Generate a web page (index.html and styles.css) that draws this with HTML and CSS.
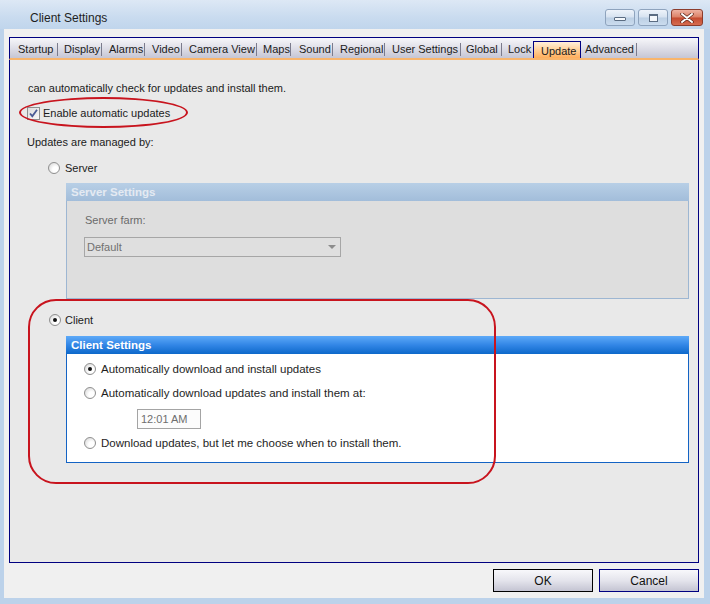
FILE: index.html
```html
<!DOCTYPE html>
<html>
<head>
<meta charset="utf-8">
<title>Client Settings</title>
<link rel="stylesheet" href="styles.css">
</head>
<body>
<div class="window">
  <div class="titlebar">
    <span class="title">Client Settings</span>
    <div class="caption">
      <span class="cbtn min"><i></i></span>
      <span class="cbtn max"><i></i></span>
      <span class="cbtn close"><svg width="14" height="10" viewBox="0 0 14 10"><path d="M2 1 L12 9 M12 1 L2 9" stroke="#5a2418" stroke-width="3.4" stroke-linecap="round"/><path d="M2 1 L12 9 M12 1 L2 9" stroke="#ffffff" stroke-width="2" stroke-linecap="round"/></svg></span>
    </div>
  </div>
  <div class="client">
    <div class="tabs">
      <div class="tab t-startup"><span class="tlabel">Startup</span><span class="sep"></span></div>
      <div class="tab t-display"><span class="tlabel">Display</span><span class="sep"></span></div>
      <div class="tab t-alarms"><span class="tlabel">Alarms</span><span class="sep"></span></div>
      <div class="tab t-video"><span class="tlabel">Video</span><span class="sep"></span></div>
      <div class="tab t-camera"><span class="tlabel">Camera View</span><span class="sep"></span></div>
      <div class="tab t-maps"><span class="tlabel">Maps</span><span class="sep"></span></div>
      <div class="tab t-sound"><span class="tlabel">Sound</span><span class="sep"></span></div>
      <div class="tab t-regional"><span class="tlabel">Regional</span><span class="sep"></span></div>
      <div class="tab t-user"><span class="tlabel">User Settings</span><span class="sep"></span></div>
      <div class="tab t-global"><span class="tlabel">Global</span><span class="sep"></span></div>
      <div class="tab t-lock"><span class="tlabel">Lock</span></div>
      <div class="tab t-update active"><span class="tlabel">Update</span></div>
      <div class="tab t-advanced"><span class="tlabel">Advanced</span><span class="sep"></span></div>
    </div>
    <div class="panel">
      <div class="intro">can automatically check for updates and install them.</div>
      <div class="check-row">
        <span class="checkbox"><svg width="11" height="11" viewBox="0 0 11 11"><path d="M2 5.5 L4.3 8.2 L9 1.8" fill="none" stroke="#4a5a94" stroke-width="1.8"/></svg></span>
        <span>Enable automatic updates</span>
      </div>
      <div class="managed">Updates are managed by:</div>
      <div class="radio-row server-radio">
        <span class="radio"></span><span>Server</span>
      </div>
      <div class="group server-group">
        <div class="ghead">Server Settings</div>
        <div class="field-label">Server farm:</div>
        <div class="select"><span>Default</span><svg width="8" height="4" viewBox="0 0 8 4"><path d="M0 0 H8 L4 4 Z" fill="#8c8c8c"/></svg></div>
      </div>
      <div class="radio-row client-radio">
        <span class="radio on"><i></i></span><span>Client</span>
      </div>
      <div class="group client-group">
        <div class="ghead">Client Settings</div>
        <div class="radio-row opt1"><span class="radio on"><i></i></span><span>Automatically download and install updates</span></div>
        <div class="radio-row opt2"><span class="radio"></span><span>Automatically download updates and install them at:</span></div>
        <div class="time">12:01 AM</div>
        <div class="radio-row opt3"><span class="radio"></span><span>Download updates, but let me choose when to install them.</span></div>
      </div>
      <div class="mark-ellipse"></div>
      <div class="mark-rect"></div>
    </div>
    <div class="footer">
      <button class="btn default">OK</button>
      <button class="btn">Cancel</button>
    </div>
  </div>
</div>
</body>
</html>
```
FILE: styles.css
```css
html, body {
  margin: 0;
  padding: 0;
}
body {
  width: 710px;
  height: 604px;
  overflow: hidden;
  background: #bcd2ea;
  font-family: "Liberation Sans", Arial, sans-serif;
  font-size: 11px;
  color: #1b1b1b;
}
.window {
  display: flex;
  flex-direction: column;
  height: 604px;
}
.titlebar {
  height: 29px;
  box-sizing: border-box;
  display: flex;
  align-items: flex-start;
  padding: 0 7px 0 30px;
  background: linear-gradient(#dde8f5, #c9dbef 60%, #c0d5ec);
}
.title {
  flex: 1;
  font-size: 12px;
  line-height: 16px;
  margin-top: 10px;
  color: #1e1e1e;
}
.caption {
  display: flex;
  gap: 3px;
  margin-top: 9px;
}
.cbtn {
  height: 17px;
  box-sizing: border-box;
  border: 1px solid #8ea3bd;
  border-radius: 3px;
  display: flex;
  align-items: center;
  justify-content: center;
  background: linear-gradient(#eef3fa, #d6e2f0 48%, #bccfe4 52%, #cbdcee);
}
.min, .max { width: 30px; }
.min i {
  width: 10px;
  height: 2px;
  border: 1px solid #5b6c82;
  background: #f4f7fb;
  border-radius: 1px;
  margin-top: 3px;
}
.max i {
  width: 7px;
  height: 5px;
  border: 1px solid #5b6c82;
  border-top-width: 2px;
  background: #f4f7fb;
}
.close {
  width: 32px;
  border-color: #8c3c2c;
  background: linear-gradient(#eeb2a2, #dc8066 48%, #c44a30 52%, #d66c50);
}
.client {
  flex: 1;
  margin: 0 6px 6px 4px;
  background: #f0f0f0;
  padding: 8px 5px 0 5px;
  display: flex;
  flex-direction: column;
}
.tabs {
  display: flex;
  height: 20px;
  border: 1px solid #000080;
  border-bottom: 2px solid #f9b56c;
  background: linear-gradient(#f7f7fa, #dcdce6 55%, #c6c6d4);
}
.tab {
  display: flex;
  align-items: center;
  box-sizing: border-box;
  padding-left: 6px;
  height: 20px;
  line-height: 14px;
}
.tlabel {
  flex: 1;
  white-space: nowrap;
  padding-top: 1px;
}
.sep {
  width: 1px;
  height: 13px;
  background: #7b7b8c;
  margin-top: 2px;
}
.t-startup { width: 48px; padding-left: 8px; }
.t-display { width: 44px; }
.t-alarms { width: 43px; padding-left: 7px; }
.t-video { width: 37px; padding-left: 7px; }
.t-camera { width: 75px; padding-left: 7px; }
.t-maps { width: 33px; }
.t-sound { width: 43px; padding-left: 9px; }
.t-regional { width: 52px; padding-left: 7px; }
.t-user { width: 76px; padding-left: 7px; }
.t-global { width: 41px; padding-left: 5px; }
.t-lock { width: 31px; }
.t-update {
  width: 48px;
  height: 17px;
  margin-top: 3px;
  padding-left: 7px;
  border: 1px solid #000080;
  border-bottom: none;
  background: linear-gradient(#fff0dc, #ffd098 50%, #ffae5c);
}
.t-advanced { width: 56px; padding-left: 4px; }
.panel {
  position: relative;
  box-sizing: border-box;
  height: 503px;
  border: 1px solid #000080;
  border-top: none;
  background: #e9e9e9;
  display: flex;
  flex-direction: column;
  align-items: flex-start;
}
.intro {
  margin: 21px 0 0 18px;
  line-height: 14px;
}
.check-row {
  display: flex;
  align-items: center;
  gap: 3px;
  height: 13px;
  margin: 12px 0 0 17px;
  line-height: 13px;
}
.checkbox {
  width: 13px;
  height: 13px;
  box-sizing: border-box;
  border: 1px solid #8e8f8f;
  background: linear-gradient(135deg, #dcdcdc, #f8f8f8);
  display: flex;
  align-items: center;
  justify-content: center;
}
.managed {
  margin: 15px 0 0 17px;
  line-height: 14px;
}
.radio-row {
  display: flex;
  align-items: center;
  gap: 5px;
  height: 12px;
  line-height: 14px;
}
.radio {
  width: 12px;
  height: 12px;
  box-sizing: border-box;
  border-radius: 50%;
  border: 1px solid #8f8f8f;
  background: radial-gradient(circle at 65% 65%, #ffffff 30%, #e4e4e4 70%, #c8c8c8);
  display: flex;
  align-items: center;
  justify-content: center;
  flex: none;
}
.radio i {
  width: 4px;
  height: 4px;
  border-radius: 50%;
  background: #111;
}
.server-radio { margin: 13px 0 0 38px; }
.group {
  margin: 10px 0 0 56px;
  width: 623px;
  box-sizing: border-box;
  display: flex;
  flex-direction: column;
  align-items: flex-start;
}
.server-radio + .group { margin-top: 9px; }
.ghead {
  align-self: stretch;
  height: 18px;
  line-height: 18px;
  padding-left: 4px;
  font-weight: bold;
  font-size: 11.5px;
}
.server-group {
  height: 116px;
  border: 1px solid #9db6d2;
  border-top: none;
  background: #dedede;
}
.server-group .ghead {
  color: #e4eaf2;
  background: linear-gradient(#b8cfe6, #a2bdda);
  margin: 0 -1px;
  padding-left: 5px;
}
.field-label {
  margin: 12px 0 0 18px;
  line-height: 14px;
  color: #6b6b6b;
}
.select {
  margin: 10px 0 0 17px;
  width: 257px;
  height: 20px;
  box-sizing: border-box;
  border: 1px solid #a6a6a6;
  background: #dfdfdf;
  color: #717171;
  display: flex;
  align-items: center;
  justify-content: space-between;
  padding: 0 4px 0 2px;
}
.client-radio { margin: 15px 0 0 39px; gap: 4px; }
.client-group {
  height: 127px;
  border: 1px solid #1463c4;
  border-top: none;
  background: #ffffff;
  color: #1e1e1e;
  font-size: 11.5px;
}
.client-group .ghead {
  color: #ffffff;
  background: linear-gradient(#5eaaf8, #3286e6 50%, #0d68ca);
  margin: 0 -1px;
  padding-left: 5px;
}
.opt1 { margin: 9px 0 0 17px; }
.opt2 { margin: 12px 0 0 17px; }
.opt3 { margin: 8px 0 0 17px; }
.time {
  margin: 10px 0 0 70px;
  width: 64px;
  height: 20px;
  box-sizing: border-box;
  border: 1px solid #a4a4a4;
  background: #fcfcfc;
  color: #6e6e6e;
  line-height: 18px;
  padding-left: 3px;
  font-size: 11px;
}
.mark-ellipse {
  position: absolute;
  left: 9px;
  top: 37px;
  width: 169px;
  height: 31px;
  box-sizing: border-box;
  border: 2px solid #c8141e;
  border-radius: 50%;
}
.mark-rect {
  position: absolute;
  left: 18px;
  top: 239px;
  width: 468px;
  height: 185px;
  box-sizing: border-box;
  border: 2px solid #c8141e;
  border-radius: 28px;
}
.footer {
  display: flex;
  justify-content: flex-end;
  gap: 6px;
  margin-top: 6px;
}
.btn {
  width: 100px;
  height: 23px;
  box-sizing: border-box;
  border: 1px solid #000080;
  background: linear-gradient(#f8f8fb, #e4e4ec 50%, #c4c4d2);
  font-family: "Liberation Sans", Arial, sans-serif;
  font-size: 12px;
  color: #111;
  padding: 0;
}
.btn.default {
  border-color: #000000;
}
```
